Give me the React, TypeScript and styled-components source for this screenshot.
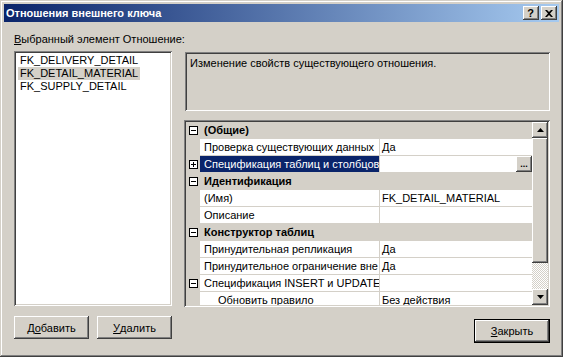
import React from 'react';
import styled, { createGlobalStyle, css } from 'styled-components';

const FACE = '#d4d0c8';
const SHADOW = '#808080';
const DARK = '#404040';
const NAVY = '#0a246a';

const raised = css`
  box-shadow: inset -1px -1px ${DARK}, inset 1px 1px #fff, inset -2px -2px ${SHADOW}, inset 2px 2px ${FACE};
`;

const sunken = css`
  box-shadow: inset 1px 1px ${SHADOW}, inset -1px -1px #fff, inset 2px 2px ${DARK}, inset -2px -2px ${FACE};
`;

const GlobalStyle = createGlobalStyle`
  html, body {
    margin: 0;
    padding: 0;
    background: ${FACE};
  }
  body {
    font-family: "Liberation Sans", Arial, sans-serif;
    font-size: 11px;
    color: #000;
  }
`;

interface IRow {
  kind: 'category' | 'prop';
  name: string;
  value?: string;
  toggle?: '+' | '-';
  selected?: boolean;
  indent?: boolean;
  button?: boolean;
}

// the grid shows long names cut at the column edge
const rows: IRow[] = [
  { kind: 'category', name: '(Общие)', toggle: '-' },
  { kind: 'prop', name: 'Проверка существующих данных', value: 'Да' },
  { kind: 'prop', name: 'Спецификация таблиц и столбцов', value: '', toggle: '+', selected: true, button: true },
  { kind: 'category', name: 'Идентификация', toggle: '-' },
  { kind: 'prop', name: '(Имя)', value: 'FK_DETAIL_MATERIAL' },
  { kind: 'prop', name: 'Описание', value: '' },
  { kind: 'category', name: 'Конструктор таблиц', toggle: '-' },
  { kind: 'prop', name: 'Принудительная репликация', value: 'Да' },
  { kind: 'prop', name: 'Принудительное ограничение вне', value: 'Да' },
  { kind: 'prop', name: 'Спецификация INSERT и UPDATE', value: '', toggle: '-' },
  { kind: 'prop', name: 'Обновить правило', value: 'Без действия', indent: true },
];

const relations = ['FK_DELIVERY_DETAIL', 'FK_DETAIL_MATERIAL', 'FK_SUPPLY_DETAIL'];

const App: React.FC = () => {
  return (
    <>
      <GlobalStyle />
      <Window>
        <TitleBar>
          <TitleText>Отношения внешнего ключа</TitleText>
          <CaptionButtons>
            <CaptionButton>?</CaptionButton>
            <CaptionButton>
              <svg width="8" height="7" viewBox="0 0 8 7">
                <path d="M0 0h2l2 2 2-2h2L5 3.5 8 7H6L4 5 2 7H0l3-3.5z" fill="#000" />
              </svg>
            </CaptionButton>
          </CaptionButtons>
        </TitleBar>
        <Body>
          <Label>
            <u>В</u>ыбранный элемент Отношение:
          </Label>
          <span />
          <ListBox>
            {relations.map((r) => (
              <ListItem key={r} selected={r === 'FK_DETAIL_MATERIAL'}>
                {r}
              </ListItem>
            ))}
          </ListBox>
          <RightColumn>
            <Description>Изменение свойств существующего отношения.</Description>
            <PropertyGrid>
              <GridRows>
                {rows.map((row, i) => (
                  <GridRow key={i} kind={row.kind}>
                    <Gutter>
                      {row.toggle && <ToggleBox>{row.toggle === '+' ? <PlusV /> : null}</ToggleBox>}
                    </Gutter>
                    {row.kind === 'category' ? (
                      <CategoryName>{row.name}</CategoryName>
                    ) : (
                      <>
                        <NameCell selected={row.selected} indent={row.indent}>
                          {row.name}
                        </NameCell>
                        <ValueCell>
                          <span>{row.value}</span>
                          {row.button && <EllipsisButton>...</EllipsisButton>}
                        </ValueCell>
                      </>
                    )}
                  </GridRow>
                ))}
              </GridRows>
              <ScrollBar>
                <ScrollButton>
                  <svg width="7" height="4" viewBox="0 0 7 4">
                    <path d="M3.5 0L7 4H0z" fill="#000" />
                  </svg>
                </ScrollButton>
                <Thumb />
                <Track />
                <ScrollButton>
                  <svg width="7" height="4" viewBox="0 0 7 4">
                    <path d="M0 0h7L3.5 4z" fill="#000" />
                  </svg>
                </ScrollButton>
              </ScrollBar>
            </PropertyGrid>
          </RightColumn>
          <LeftButtons>
            <Button>
              Д<u>о</u>бавить
            </Button>
            <Button>
              <u>У</u>далить
            </Button>
          </LeftButtons>
          <RightButtons>
            <DefaultButton>
              <u>З</u>акрыть
            </DefaultButton>
          </RightButtons>
        </Body>
      </Window>
    </>
  );
};

export default App;

const Window = styled.div`
  width: 563px;
  height: 357px;
  box-sizing: border-box;
  padding: 4px;
  background: ${FACE};
  box-shadow: inset -1px -1px ${DARK}, inset 1px 1px ${FACE}, inset -2px -2px ${SHADOW}, inset 2px 2px #fff;
  display: flex;
  flex-direction: column;
`;

const TitleBar = styled.div`
  height: 18px;
  flex: none;
  display: flex;
  align-items: center;
  justify-content: space-between;
  padding: 0 2px;
  background: linear-gradient(to right, ${NAVY}, #a6caf0);
`;

const TitleText = styled.span`
  color: #fff;
  font-weight: bold;
  font-size: 11px;
  white-space: nowrap;
`;

const CaptionButtons = styled.div`
  display: flex;
  gap: 2px;
`;

const CaptionButton = styled.div`
  width: 16px;
  height: 14px;
  box-sizing: border-box;
  background: ${FACE};
  ${raised};
  display: flex;
  align-items: center;
  justify-content: center;
  font-weight: bold;
  font-size: 11px;
  line-height: 14px;
  padding-right: 1px;
`;

const Body = styled.div`
  flex: 1;
  display: grid;
  grid-template-columns: 158px 366px;
  grid-template-rows: 13px 256px 1fr;
  column-gap: 12px;
  row-gap: 5px;
  padding: 11px 0 0 10px;
`;

const Label = styled.div`
  line-height: 13px;
  white-space: nowrap;
`;

const ListBox = styled.div`
  ${sunken};
  background: #fff;
  padding: 3px 4px;
  height: 255px;
  box-sizing: border-box;
  display: flex;
  flex-direction: column;
  align-items: flex-start;
`;

const ListItem = styled.div<{ selected?: boolean }>`
  line-height: 13px;
  padding: 0 2px;
  white-space: nowrap;
  background: ${({ selected }) => (selected ? FACE : 'transparent')};
`;

const RightColumn = styled.div`
  display: flex;
  flex-direction: column;
  gap: 9px;
  padding-top: 1px;
`;

const Description = styled.div`
  ${sunken};
  margin-left: 1px;
  height: 59px;
  box-sizing: border-box;
  padding: 5px;
  line-height: 13px;
`;

const PropertyGrid = styled.div`
  ${sunken};
  height: 187px;
  box-sizing: border-box;
  padding: 2px;
  display: flex;
  overflow: hidden;
`;

const GridRows = styled.div`
  flex: 1;
  display: flex;
  flex-direction: column;
  overflow: hidden;
  background: #fff;
`;

const GridRow = styled.div<{ kind: 'category' | 'prop' }>`
  flex: none;
  height: 16px;
  display: flex;
  border-bottom: 1px solid ${FACE};
  background: ${({ kind }) => (kind === 'category' ? FACE : '#fff')};
`;

const Gutter = styled.div`
  width: 14px;
  flex: none;
  background: ${FACE};
  display: flex;
  align-items: center;
  justify-content: center;
`;

const ToggleBox = styled.div`
  position: relative;
  width: 9px;
  height: 9px;
  box-sizing: border-box;
  border: 1px solid #000;
  background: #fff;
  &::before {
    content: '';
    position: absolute;
    left: 1px;
    top: 3px;
    width: 5px;
    height: 1px;
    background: #000;
  }
`;

const PlusV = styled.span`
  position: absolute;
  left: 3px;
  top: 1px;
  width: 1px;
  height: 5px;
  background: #000;
`;

const CategoryName = styled.div`
  font-weight: bold;
  padding-left: 4px;
  line-height: 16px;
  white-space: nowrap;
`;

const NameCell = styled.div<{ selected?: boolean; indent?: boolean }>`
  width: 180px;
  flex: none;
  box-sizing: border-box;
  border-right: 1px solid ${FACE};
  padding-left: ${({ indent }) => (indent ? '18px' : '4px')};
  line-height: 16px;
  white-space: nowrap;
  overflow: hidden;
  background: ${({ selected }) => (selected ? NAVY : '#fff')};
  color: ${({ selected }) => (selected ? '#fff' : '#000')};
`;

const ValueCell = styled.div`
  flex: 1;
  display: flex;
  padding-left: 2px;
  line-height: 16px;
  white-space: nowrap;
  overflow: hidden;
`;

const EllipsisButton = styled.div`
  margin-left: auto;
  width: 16px;
  height: 16px;
  box-sizing: border-box;
  background: ${FACE};
  ${raised};
  font-size: 9px;
  line-height: 16px;
  text-align: center;
  font-weight: bold;
`;

const ScrollBar = styled.div`
  width: 16px;
  flex: none;
  display: flex;
  flex-direction: column;
`;

const ScrollButton = styled.div`
  width: 16px;
  height: 16px;
  flex: none;
  box-sizing: border-box;
  background: ${FACE};
  ${raised};
  display: flex;
  align-items: center;
  justify-content: center;
`;

const Thumb = styled.div`
  height: 125px;
  flex: none;
  background: ${FACE};
  ${raised};
`;

const Track = styled.div`
  flex: 1;
  background-color: #fff;
  background-image: conic-gradient(${FACE} 25%, #fff 0 50%, ${FACE} 0 75%, #fff 0);
  background-size: 2px 2px;
`;

const LeftButtons = styled.div`
  display: flex;
  gap: 8px;
  padding-top: 4px;
`;

const RightButtons = styled.div`
  display: flex;
  justify-content: flex-end;
  padding-top: 7px;
`;

const Button = styled.div`
  width: 75px;
  height: 23px;
  box-sizing: border-box;
  background: ${FACE};
  ${raised};
  display: flex;
  align-items: center;
  justify-content: center;
`;

const DefaultButton = styled(Button)`
  width: 76px;
  height: 24px;
  border: 1px solid #000;
`;
